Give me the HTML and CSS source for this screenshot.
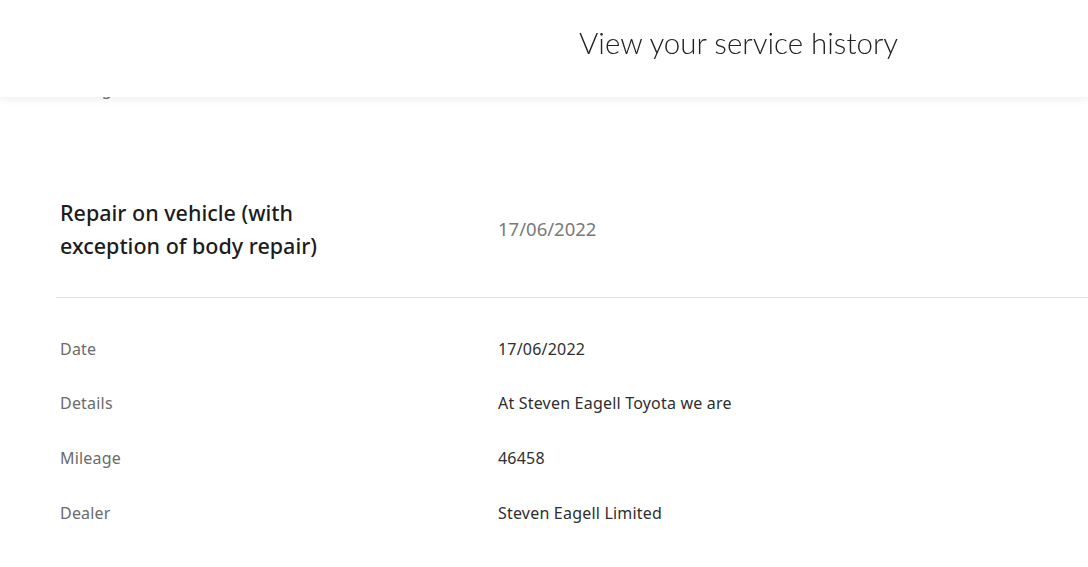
FILE: index.html
```html
<!DOCTYPE html>
<html lang="en">
<head>
<meta charset="utf-8">
<title>View your service history</title>
<link rel="stylesheet" href="styles.css">
</head>
<body>
<header class="topbar">
  <h1 class="topbar-title">View your service history</h1>
</header>
<main class="history">
  <div class="row row-hidden">
    <span class="row-label">Mileage</span>
    <span class="row-value">46458</span>
  </div>
  <section class="entry">
    <div class="entry-head">
      <h2 class="entry-title">Repair on vehicle (with exception of body repair)</h2>
      <span class="entry-date">17/06/2022</span>
    </div>
    <div class="entry-body">
      <div class="row">
        <span class="row-label">Date</span>
        <span class="row-value">17/06/2022</span>
      </div>
      <div class="row">
        <span class="row-label">Details</span>
        <span class="row-value">At Steven Eagell Toyota we are</span>
      </div>
      <div class="row">
        <span class="row-label">Mileage</span>
        <span class="row-value">46458</span>
      </div>
      <div class="row">
        <span class="row-label">Dealer</span>
        <span class="row-value">Steven Eagell Limited</span>
      </div>
    </div>
  </section>
</main>
</body>
</html>
```

FILE: styles.css
```css
* { box-sizing: border-box; }

html, body {
  margin: 0;
  padding: 0;
  background: #ffffff;
  font-family: "Noto Sans", "Lato", sans-serif;
  color: #2a2a2a;
}

body { overflow: hidden; }

.topbar {
  position: fixed;
  top: 0;
  left: 0;
  right: 0;
  height: 97px;
  background: #ffffff;
  box-shadow: 0 2px 8px rgba(0, 0, 0, 0.08);
  z-index: 10;
  display: flex;
  align-items: center;
  padding: 0 0 12px 579px;
}

.topbar-title {
  margin: 0;
  font-family: "Lato", sans-serif;
  font-size: 29.5px;
  font-weight: 300;
  color: #222222;
}

.history {
  padding: 62px 0 0 56px;
}

.row {
  display: grid;
  grid-template-columns: 438px 1fr;
  height: 54.6px;
  align-items: center;
  padding-left: 4px;
  font-size: 16px;
  letter-spacing: 0.2px;
}

.row-label { color: #6b6b6b; }
.row-value { color: #2e2e2e; }

.entry-head {
  display: grid;
  grid-template-columns: 438px 1fr;
  align-items: center;
  padding: 79px 0 35px 4px;
  border-bottom: 1px solid #e2e2e2;
}

.entry-title {
  margin: 0;
  font-size: 21.5px;
  line-height: 33px;
  font-weight: 500;
  color: #1c1c1c;
  max-width: 290px;
}

.entry-date {
  font-size: 18.5px;
  color: #7a7a7a;
}

.entry-body {
  padding-top: 24px;
}
```
